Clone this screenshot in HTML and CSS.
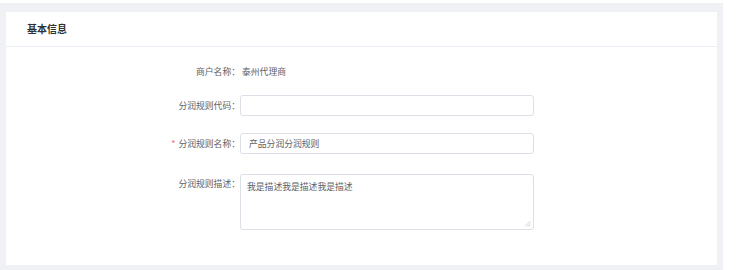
FILE: index.html
```html
<!DOCTYPE html>
<html lang="zh-CN">
<head>
    <meta charset="UTF-8">
    <meta name="viewport" content="width=device-width, initial-scale=1.0">
    <title>基本信息</title>
    <link rel="stylesheet" href="styles.css">
</head>
<body>
    <main class="page">
        <section class="card">
            <header class="card-header">基本信息</header>
            <div class="card-body">
                <div class="form-row row-merchant">
                    <label class="form-label">商户名称：</label>
                    <span class="form-value">泰州代理商</span>
                </div>
                <div class="form-row row-code">
                    <label class="form-label" for="code">分润规则代码：</label>
                    <input class="form-input" type="text" id="code">
                </div>
                <div class="form-row row-name">
                    <label class="form-label required" for="name">分润规则名称：</label>
                    <input class="form-input" type="text" id="name" value="产品分润分润规则">
                </div>
                <div class="form-row">
                    <label class="form-label label-top" for="desc">分润规则描述：</label>
                    <div class="textarea-wrap">
                        <textarea class="form-textarea" id="desc">我是描述我是描述我是描述</textarea>
                        <svg class="resize-grip" width="7" height="7" viewBox="0 0 7 7">
                            <path d="M1 6.5L6.5 1M3.5 6.5L6.5 3.5M5.5 6.5L6.5 5.5" stroke="#c0c4cc" stroke-width="0.8" fill="none"/>
                        </svg>
                    </div>
                </div>
            </div>
        </section>
    </main>
</body>
</html>
```

FILE: styles.css
```css
html, body { margin: 0; background-color: #fff; }
body { font-family: "Noto Sans CJK SC", "Noto Sans", sans-serif; color: #606266; }
.page { box-sizing: border-box; width: 723px; height: 267px; margin-top: 3px; padding: 9px 6px 5px; background-color: #f0f1f5; }
.card { height: 253px; background-color: #fff; }
.card-header { box-sizing: border-box; height: 35px; line-height: 34px; padding-left: 21px; border-bottom: 1px solid #ebeef5; font-size: 10px; font-weight: bold; color: #303133; }
.card-body { padding-top: 14px; }
.form-row { display: flex; align-items: flex-start; }
.row-merchant { margin-bottom: 12px; }
.row-code { margin-bottom: 17px; }
.row-name { margin-bottom: 20px; }
.form-label { width: 234px; flex-shrink: 0; text-align: right; font-size: 8.8px; line-height: 21px; color: #606266; }
.form-label.label-top { line-height: 20px; }
.form-label.required::before { content: "*"; color: #f56c6c; margin-right: 3px; }
.form-value { margin-left: 2px; font-size: 8.8px; line-height: 22px; color: #606266; }
.form-input { box-sizing: border-box; width: 294px; height: 21px; padding: 0 8px; border: 1px solid #dcdfe6; border-radius: 3px; font-family: inherit; font-size: 8.8px; color: #606266; outline: none; }
.textarea-wrap { position: relative; width: 294px; height: 56px; }
.form-textarea { display: block; box-sizing: border-box; width: 294px; height: 56px; padding: 5px 6px; border: 1px solid #dcdfe6; border-radius: 3px; font-family: inherit; font-size: 8.8px; line-height: 14px; color: #606266; outline: none; resize: none; }
.resize-grip { position: absolute; right: 3px; bottom: 3px; }
```
